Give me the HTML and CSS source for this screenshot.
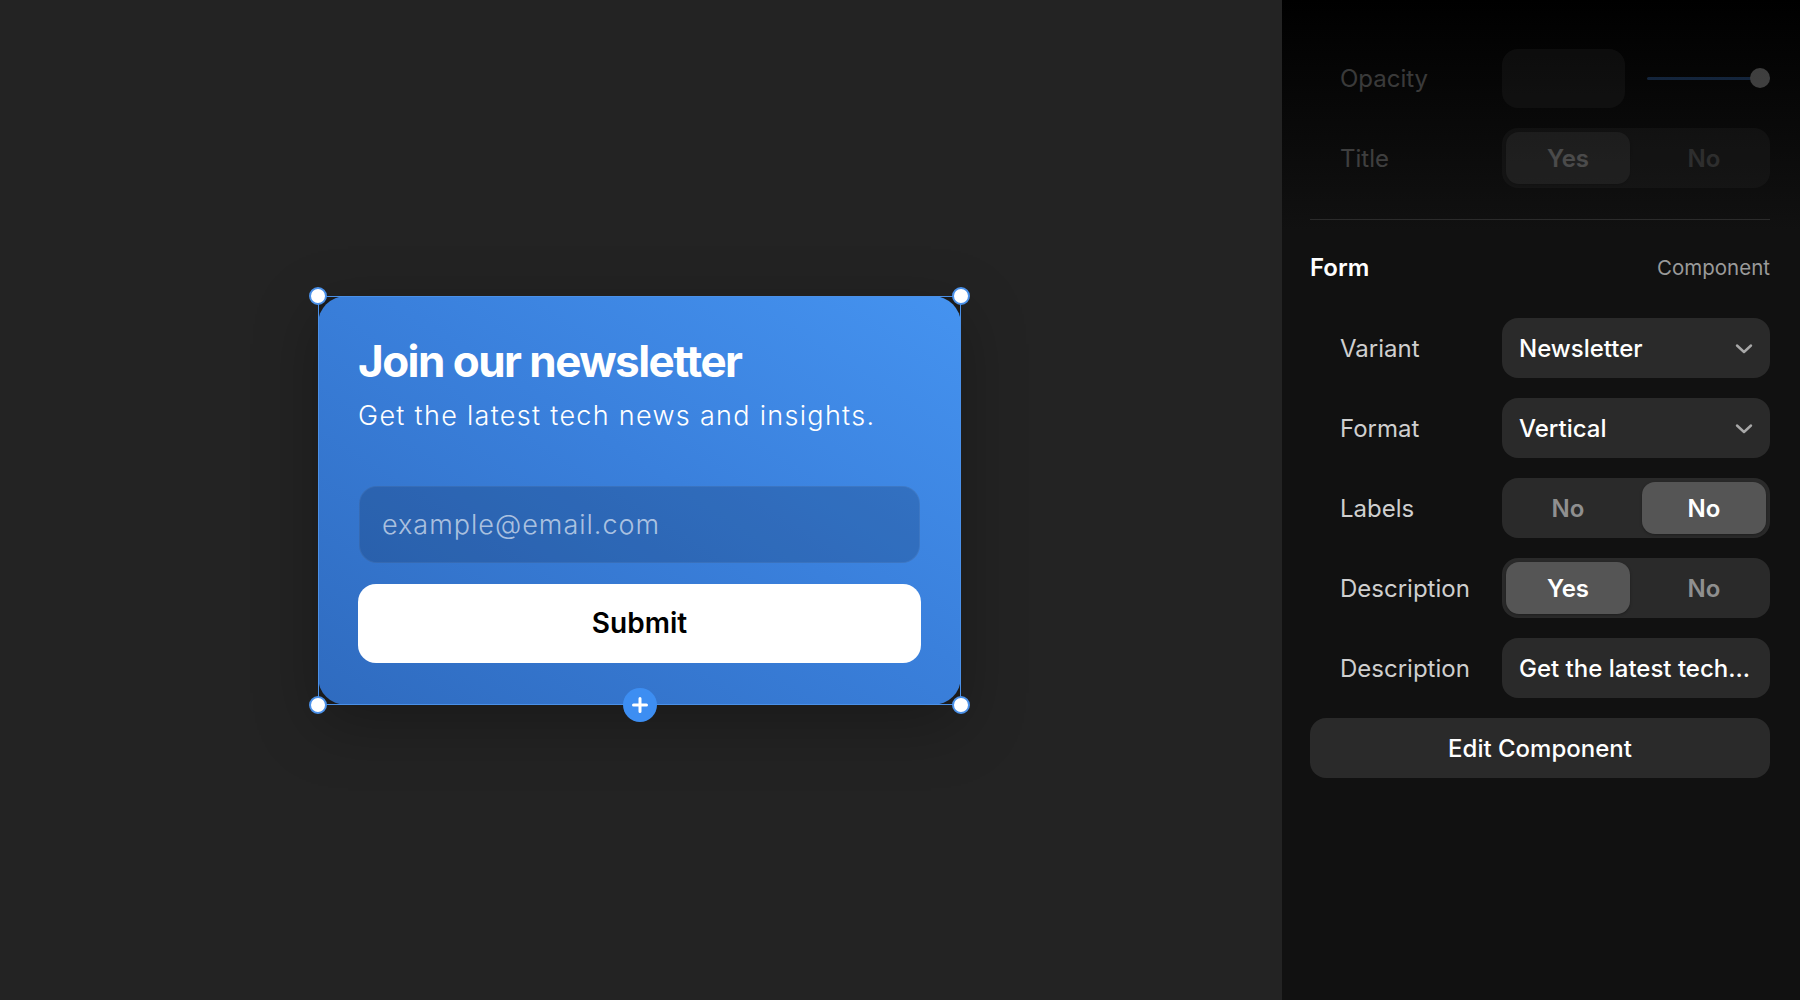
FILE: index.html
```html
<!DOCTYPE html>
<html lang="en">
<head>
<meta charset="utf-8">
<title>Newsletter form editor</title>
<link rel="stylesheet" href="styles.css">
</head>
<body>
<main class="canvas">
  <div class="selection">
    <section class="card">
      <h1 class="card-title">Join our newsletter</h1>
      <p class="card-sub">Get the latest tech news and insights.</p>
      <div class="email">example@email.com</div>
      <div class="submit">Submit</div>
    </section>
    <div class="frame"></div>
    <span class="handle tl"></span>
    <span class="handle tr"></span>
    <span class="handle bl"></span>
    <span class="handle br"></span>
    <span class="add">
      <svg viewBox="0 0 20 20" width="20" height="20"><path d="M10 3.5v13M3.5 10h13" stroke="#fff" stroke-width="3" stroke-linecap="round" fill="none"/></svg>
    </span>
  </div>
</main>
<aside class="panel">
  <div class="faded">
    <div class="row">
      <span class="label">Opacity</span>
      <div class="opacity-ctl">
        <div class="field small"></div>
        <div class="slider"><span class="track"></span><span class="thumb"></span></div>
      </div>
    </div>
    <div class="row">
      <span class="label">Title</span>
      <div class="toggle">
        <span class="seg on">Yes</span>
        <span class="seg">No</span>
      </div>
    </div>
  </div>
  <hr class="divider">
  <div class="section-head">
    <span class="section-title">Form</span>
    <span class="section-kind">Component</span>
  </div>
  <div class="rows">
    <div class="row">
      <span class="label">Variant</span>
      <div class="field select">
        <span>Newsletter</span>
        <svg class="chev" viewBox="0 0 18 18" width="18" height="18"><path d="M2 6.5l7 6.5 7-6.5" stroke="#a8a8a8" stroke-width="2.4" fill="none" stroke-linecap="round" stroke-linejoin="round"/></svg>
      </div>
    </div>
    <div class="row">
      <span class="label">Format</span>
      <div class="field select">
        <span>Vertical</span>
        <svg class="chev" viewBox="0 0 18 18" width="18" height="18"><path d="M2 6.5l7 6.5 7-6.5" stroke="#a8a8a8" stroke-width="2.4" fill="none" stroke-linecap="round" stroke-linejoin="round"/></svg>
      </div>
    </div>
    <div class="row">
      <span class="label">Labels</span>
      <div class="toggle">
        <span class="seg">No</span>
        <span class="seg on">No</span>
      </div>
    </div>
    <div class="row">
      <span class="label">Description</span>
      <div class="toggle">
        <span class="seg on">Yes</span>
        <span class="seg">No</span>
      </div>
    </div>
    <div class="row">
      <span class="label">Description</span>
      <div class="field"><span>Get the latest tech...</span></div>
    </div>
    <div class="edit">Edit Component</div>
  </div>
</aside>
</body>
</html>
```

FILE: styles.css
```css
* { box-sizing: border-box; }
html, body { margin: 0; padding: 0; }
body {
  display: flex;
  width: 1800px;
  height: 1000px;
  overflow: hidden;
  font-family: Inter, "Noto Sans", sans-serif;
  background: #232323;
}

/* ---------- canvas ---------- */
.canvas {
  flex: 1;
  display: flex;
  align-items: center;
  justify-content: center;
  padding-right: 3px;
  background: #232323;
}
.selection {
  position: relative;
  width: 643px;
  height: 409px;
  background: #1b1b1b;
  box-shadow: 0 18px 60px rgba(0, 0, 0, 0.28);
}
.card {
  width: 100%;
  height: 100%;
  border-radius: 28px;
  background: linear-gradient(to top right, #2f6bbf 0%, #3a80dc 55%, #4593f0 100%);
  padding: 40px;
  display: flex;
  flex-direction: column;
}
.card-title {
  margin: 0;
  color: #fff;
  font-family: Inter, sans-serif;
  font-weight: 700;
  font-size: 44px;
  letter-spacing: -0.035em;
  line-height: 50px;
}
.card-sub {
  margin: 12px 0 0 0;
  color: #fff;
  font-size: 27px;
  font-weight: 300;
  line-height: 36px;
  letter-spacing: 1.3px;
}
.email {
  margin-top: 52px;
  height: 77px;
  border-radius: 18px;
  background: rgba(10, 30, 70, 0.22);
  border: 1px solid rgba(255, 255, 255, 0.06);
  color: rgba(255, 255, 255, 0.62);
  font-size: 27px;
  font-weight: 300;
  letter-spacing: 1px;
  display: flex;
  align-items: center;
  padding-left: 22px;
  margin-left: 1px;
  margin-right: 1px;
}
.submit {
  margin-top: 21px;
  height: 79px;
  border-radius: 18px;
  background: #fff;
  color: #000;
  font-size: 28px;
  font-weight: 600;
  display: flex;
  align-items: center;
  justify-content: center;
}
.frame {
  position: absolute;
  inset: 0;
  border: 1.5px solid #4a90e8;
  pointer-events: none;
}
.handle {
  position: absolute;
  width: 18px;
  height: 18px;
  border-radius: 50%;
  background: #fff;
  border: 2px solid #4a90e8;
}
.handle.tl { left: -9px; top: -9px; }
.handle.tr { right: -9px; top: -9px; }
.handle.bl { left: -9px; bottom: -9px; }
.handle.br { right: -9px; bottom: -9px; }
.add {
  position: absolute;
  left: 50%;
  bottom: -17px;
  width: 34px;
  height: 34px;
  margin-left: -17px;
  border-radius: 50%;
  background: #3d8ef2;
  display: flex;
  align-items: center;
  justify-content: center;
}

/* ---------- panel ---------- */
.panel {
  width: 518px;
  flex: none;
  background: linear-gradient(to bottom, #000 0px, #0b0b0b 150px, #111 230px, #111 100%);
  padding: 48px 30px 0 28px;
  color: #fff;
}
.faded { opacity: 0.26; display: flex; flex-direction: column; gap: 20px; }
.rows { display: flex; flex-direction: column; gap: 20px; }
.row {
  display: flex;
  align-items: center;
  height: 60px;
}
.label {
  width: 192px;
  padding-left: 30px;
  font-size: 24px;
  color: #cfcfcf;
  flex: none;
}
.field {
  width: 268px;
  height: 60px;
  border-radius: 16px;
  background: #2a2a2a;
  display: flex;
  align-items: center;
  padding: 0 17px 0 17px;
  font-size: 24px;
  color: #fff;
  font-weight: 450;
}
.field.select { justify-content: space-between; }
.chev { flex: none; }
.opacity-ctl {
  width: 268px;
  display: flex;
  align-items: center;
  gap: 22px;
}
.field.small { width: 123px; height: 59px; padding: 0; }
.slider {
  flex: 1;
  position: relative;
  height: 20px;
  display: flex;
  align-items: center;
}
.track {
  display: block;
  width: 100%;
  height: 3px;
  border-radius: 2px;
  background: #3d7fd6;
}
.thumb {
  position: absolute;
  right: 0;
  top: 0;
  width: 20px;
  height: 20px;
  border-radius: 50%;
  background: #e0e0e0;
}
.toggle {
  width: 268px;
  height: 60px;
  border-radius: 16px;
  background: #2a2a2a;
  padding: 4px;
  display: flex;
  gap: 12px;
}
.seg {
  flex: 1;
  border-radius: 13px;
  display: flex;
  align-items: center;
  justify-content: center;
  font-size: 24px;
  font-weight: 600;
  color: #8f8f8f;
}
.seg.on {
  background: #555;
  color: #fff;
  box-shadow: 0 1px 3px rgba(0, 0, 0, 0.3);
}
.divider {
  margin: 31px 0 0 0;
  border: none;
  height: 1px;
  background: #2b2b2b;
}
.section-head {
  display: flex;
  justify-content: space-between;
  align-items: center;
  height: 30px;
  margin: 32px 0 36px 0;
}
.section-title { font-size: 24px; font-weight: 600; color: #fff; }
.section-kind { font-size: 20.5px; color: #9a9a9a; }
.edit {
  height: 60px;
  border-radius: 16px;
  background: #2a2a2a;
  display: flex;
  align-items: center;
  justify-content: center;
  font-size: 24px;
  font-weight: 450;
  color: #fff;
}
```
